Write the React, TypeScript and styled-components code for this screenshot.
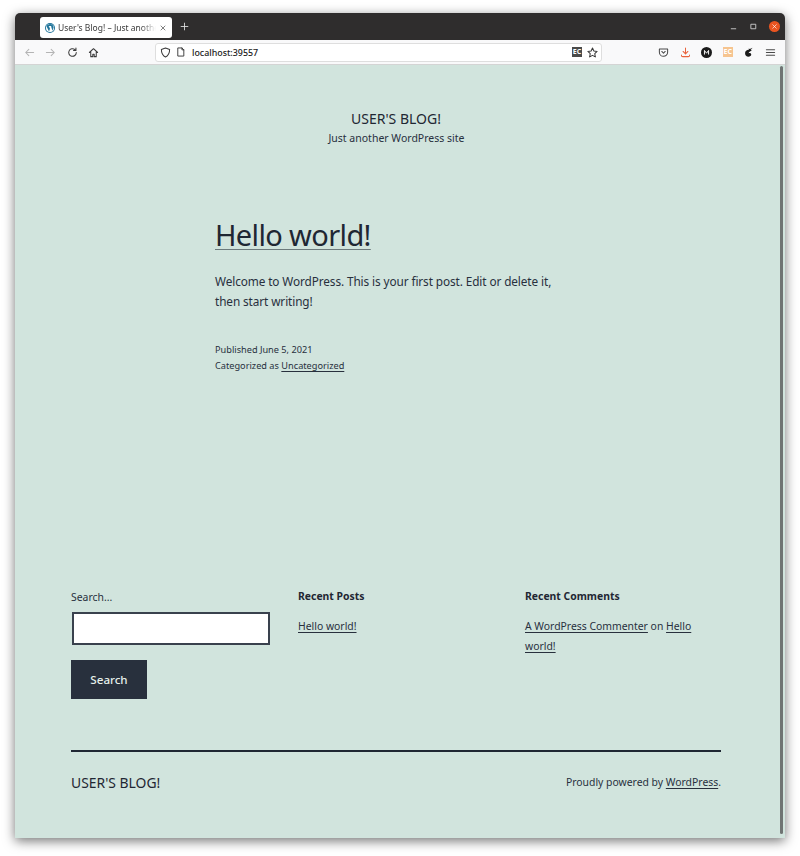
import React from 'react';
import styled, { createGlobalStyle } from 'styled-components';

const GlobalStyle = createGlobalStyle`
  html, body {
    margin: 0;
    padding: 0;
    background: #ffffff;
  }
  body {
    font-family: "Noto Sans", "Open Sans", sans-serif;
    color: #28303d;
  }
`;

const Shot = styled.div`
  width: 800px;
  height: 856px;
  padding: 13px 15px 18px;
  box-sizing: border-box;
  overflow: hidden;
`;

const BrowserWindow = styled.div`
  position: relative;
  height: 100%;
  display: flex;
  flex-direction: column;
  border-radius: 5px 5px 0 0;
  box-shadow: 0 3px 12px rgba(0, 0, 0, 0.55);
  overflow: hidden;
`;

const TitleBar = styled.div`
  height: 27px;
  flex: none;
  display: flex;
  align-items: center;
  padding: 0 5px 0 25px;
  background: #2f2d2d;
`;

const Tab = styled.div`
  width: 132px;
  height: 21px;
  margin-top: 2px;
  display: flex;
  align-items: center;
  gap: 3px;
  padding: 0 5px;
  box-sizing: border-box;
  background: #ffffff;
  border-radius: 3px;
  font-size: 8.5px;
  color: #3a3a3a;
`;

const TabTitle = styled.span`
  flex: 1;
  white-space: nowrap;
  overflow: hidden;
  -webkit-mask-image: linear-gradient(to right, #000 84%, transparent);
  mask-image: linear-gradient(to right, #000 84%, transparent);
`;

const NewTab = styled.div`
  margin-left: 8px;
  display: flex;
  color: #e4e4e4;
`;

const WindowControls = styled.div`
  margin-left: auto;
  display: flex;
  align-items: center;
  gap: 11px;
  color: #d8d8d8;
`;

const CloseDot = styled.div`
  width: 11px;
  height: 11px;
  display: flex;
  align-items: center;
  justify-content: center;
  border-radius: 50%;
  background: #e95420;
  color: #ffffff;
`;

const Toolbar = styled.div`
  height: 25px;
  flex: none;
  display: flex;
  align-items: center;
  padding: 0 9px 0 9px;
  box-sizing: border-box;
  background: #f9f9fa;
  border-bottom: 1px solid #d4d4d4;
`;

const NavGroup = styled.div`
  width: 131px;
  flex: none;
  display: flex;
  align-items: center;
  gap: 10.300px;
`;

const UrlBar = styled.div`
  width: 447px;
  height: 19px;
  flex: none;
  display: flex;
  align-items: center;
  gap: 5px;
  padding: 0 3px 0 4px;
  box-sizing: border-box;
  background: #ffffff;
  border: 1px solid #dedede;
  border-radius: 3px;
`;

const UrlText = styled.span`
  flex: 1;
  margin-left: 1px;
  font-size: 8.9px;
  font-weight: 500;
  color: #222222;
`;

const ExtensionGroup = styled.div`
  margin-left: auto;
  display: flex;
  align-items: center;
  gap: 10.600px;
`;

const Badge = styled.div<{ $bg: string }>`
  width: 10px;
  height: 10px;
  background: ${(p) => p.$bg};
  color: #ffffff;
  font-size: 7px;
  font-weight: 700;
  line-height: 10px;
  text-align: center;
`;

const Page = styled.main`
  flex: 1;
  min-height: 0;
  display: flex;
  flex-direction: column;
  padding: 0 64px 0 56px;
  background: #d1e4dd;
`;

const SiteHeader = styled.header`
  padding-top: 43px;
  text-align: center;
`;

const SiteTitle = styled.div`
  font-size: 14px;
  line-height: 22px;
  color: #1f2733;
`;

const Tagline = styled.div`
  padding-left: 1px;
  font-size: 10.500px;
  line-height: 16px;
`;

const Post = styled.article`
  width: 340px;
  margin: 68px 0 0 144px;
`;

const PostTitle = styled.h1`
  margin: 0;
  font-size: 29px;
  font-weight: 400;
  letter-spacing: -0.630px;
  line-height: 42px;
  color: #1f2733;
`;

const PostLink = styled.a<{ $offset?: number; $line?: string }>`
  color: inherit;
  text-decoration: underline;
  text-decoration-thickness: 1px;
  text-decoration-color: ${(p) => p.$line ?? 'currentColor'};
  text-underline-offset: ${(p) => p.$offset ?? 2}px;
`;

const PostBody = styled.p`
  margin: 15px 0 0;
  font-size: 11.800px;
  letter-spacing: -0.100px;
  line-height: 20px;
`;

const PostMeta = styled.div`
  margin-top: 31px;
  font-size: 9.200px;
  line-height: 16px;
`;

const Widgets = styled.section`
  margin-top: 214px;
  display: grid;
  grid-template-columns: repeat(3, 227px);
  height: 162px;
`;

const WidgetTitle = styled.h2`
  margin: 0 0 11.500px;
  font-size: 10.400px;
  font-weight: 700;
  line-height: 16px;
  color: #1f2733;
`;

const WidgetText = styled.div`
  font-size: 10.400px;
  line-height: 20px;
  width: 180px;
`;

const SearchLabel = styled.label`
  display: block;
  margin-top: 1px;
  font-size: 10.400px;
  line-height: 16px;
`;

const SearchInput = styled.div`
  width: 198px;
  height: 33px;
  margin: 7px 0 15px 1px;
  box-sizing: border-box;
  background: #ffffff;
  border: 2px solid #39414d;
`;

const SearchButton = styled.button`
  display: block;
  width: 76px;
  height: 39px;
  padding: 0;
  border: 0;
  background: #28303d;
  color: #e6f0ec;
  font-family: inherit;
  font-size: 11.600px;
  font-weight: 500;
`;

const Footer = styled.footer`
  border-top: 2px solid #1f2733;
  display: flex;
  align-items: center;
  justify-content: space-between;
  height: 60px;
  padding-bottom: 1px;
`;

const FooterTitle = styled.div`
  font-size: 13.900px;
  color: #1f2733;
`;

const FooterCredit = styled.div`
  font-size: 10.400px;
`;

const Scrollbar = styled.div`
  position: absolute;
  top: 53px;
  right: 2px;
  width: 3px;
  height: 768px;
  border-radius: 2px;
  background: #6f7473;
`;

const WordPressIcon = () => (
  <svg width="10" height="10" viewBox="0 0 20 20">
    <circle cx="10" cy="10" r="10" fill="#21759b" />
    <circle cx="10" cy="10" r="8" fill="#ffffff" />
    <path d="M3 6.500 8 17l2-5.500L8 6.500h-1V6h6v.5h-1l3 9 2-6c.5-2-.5-3-1-4L15 3 10 2 5 3.500z" fill="#21759b" />
  </svg>
);

const Glyph = ({ d, color = '#3a3a3a', size = 11 }: { d: string; color?: string; size?: number }) => (
  <svg width={size} height={size} viewBox="0 0 16 16" fill="none" stroke={color} strokeWidth="1.500" strokeLinecap="round" strokeLinejoin="round">
    <path d={d} />
  </svg>
);

export default function App() {
  return (
    <Shot>
      <GlobalStyle />
      <BrowserWindow>
        <TitleBar>
          <Tab>
            <WordPressIcon />
            <TabTitle>User's Blog! – Just another WordPress site</TabTitle>
            <Glyph d="M4 4l8 8M12 4l-8 8" color="#555" size={8} />
          </Tab>
          <NewTab>
            <Glyph d="M8 2v12M2 8h12" color="#e4e4e4" size={9} />
          </NewTab>
          <WindowControls>
            <Glyph d="M4 12h8" color="#d8d8d8" size={9} />
            <Glyph d="M4 4h8v8H4z" color="#d8d8d8" size={9} />
            <CloseDot>
              <Glyph d="M4 4l8 8M12 4l-8 8" color="#ffffff" size={7} />
            </CloseDot>
          </WindowControls>
        </TitleBar>
        <Toolbar>
          <NavGroup>
            <Glyph d="M14 8H2.500M7 3.500 2.500 8 7 12.500" color="#b4b4b4" />
            <Glyph d="M2 8h11.500M9 3.500 13.500 8 9 12.500" color="#b4b4b4" />
            <Glyph d="M13.500 8A5.500 5.500 0 1 1 11.500 3.800M13 1.500v3.500H9.500" color="#3a3a3a" />
            <Glyph d="M2 8l6-5.500L14 8M4 6.500V14h3v-3.500h2V14h3V6.500" color="#3a3a3a" />
          </NavGroup>
          <UrlBar>
            <Glyph d="M8 1.500 14 3.500c0 5-2 9-6 11-4-2-6-6-6-11z" color="#3a3a3a" />
            <Glyph d="M3.500 1.500h6l3 3v10h-9zM9.500 1.500v3h3" color="#3a3a3a" size={10} />
            <UrlText>localhost:39557</UrlText>
            <Badge $bg="#4a4a4a">EC</Badge>
            <Glyph d="M8 1.500l2 4.300 4.700.6-3.400 3.300.8 4.700L8 12.200l-4.100 2.200.8-4.700L1.300 6.400 6 5.800z" color="#3a3a3a" />
          </UrlBar>
          <ExtensionGroup>
            <Glyph d="M2 3h12v4.500a6 6 0 0 1-12 0zM5.500 6.500 8 9l2.500-2.500" color="#4a4a4a" />
            <Glyph d="M8 1.500V10M4.500 6.500 8 10l3.500-3.500M2 11.500c0 2 1 2.500 2 2.500h8c1 0 2-.5 2-2.500" color="#e9623b" />
            <svg width="11" height="11" viewBox="0 0 16 16">
              <circle cx="8" cy="8" r="8" fill="#1b1b1b" />
              <path d="M5 11V5l3 4 3-4v6" fill="none" stroke="#ffffff" strokeWidth="1.400" />
            </svg>
            <Badge $bg="#f6c48f">EC</Badge>
            <svg width="11" height="11" viewBox="0 0 16 16">
              <path d="M14 1 10 3 8 2 9 3.500C5 4 3 6 3 9c0 3 2 5 5 5 2 0 4-1 4-3s-2-3-4-2c1-2 3-3 5-4l-2-.5z" fill="#1b1b1b" />
            </svg>
            <Glyph d="M2 4h12M2 8h12M2 12h12" color="#4a4a4a" />
          </ExtensionGroup>
        </Toolbar>
        <Page>
          <SiteHeader>
            <SiteTitle>USER'S BLOG!</SiteTitle>
            <Tagline>Just another WordPress site</Tagline>
          </SiteHeader>
          <Post>
            <PostTitle>
              <PostLink href="#" $offset={3} $line="#6c7a7c">Hello world!</PostLink>
            </PostTitle>
            <PostBody>Welcome to WordPress. This is your first post. Edit or delete it, then start writing!</PostBody>
            <PostMeta>
              Published June 5, 2021
              <br />
              Categorized as <PostLink href="#">Uncategorized</PostLink>
            </PostMeta>
          </Post>
          <Widgets>
            <div>
              <SearchLabel>Search...</SearchLabel>
              <SearchInput />
              <SearchButton>Search</SearchButton>
            </div>
            <div>
              <WidgetTitle>Recent Posts</WidgetTitle>
              <WidgetText>
                <PostLink href="#">Hello world!</PostLink>
              </WidgetText>
            </div>
            <div>
              <WidgetTitle>Recent Comments</WidgetTitle>
              <WidgetText>
                <PostLink href="#">A WordPress Commenter</PostLink> on <PostLink href="#">Hello world!</PostLink>
              </WidgetText>
            </div>
          </Widgets>
          <Footer>
            <FooterTitle>USER'S BLOG!</FooterTitle>
            <FooterCredit>
              Proudly powered by <PostLink href="#">WordPress</PostLink>.
            </FooterCredit>
          </Footer>
        </Page>
        <Scrollbar />
      </BrowserWindow>
    </Shot>
  );
}
